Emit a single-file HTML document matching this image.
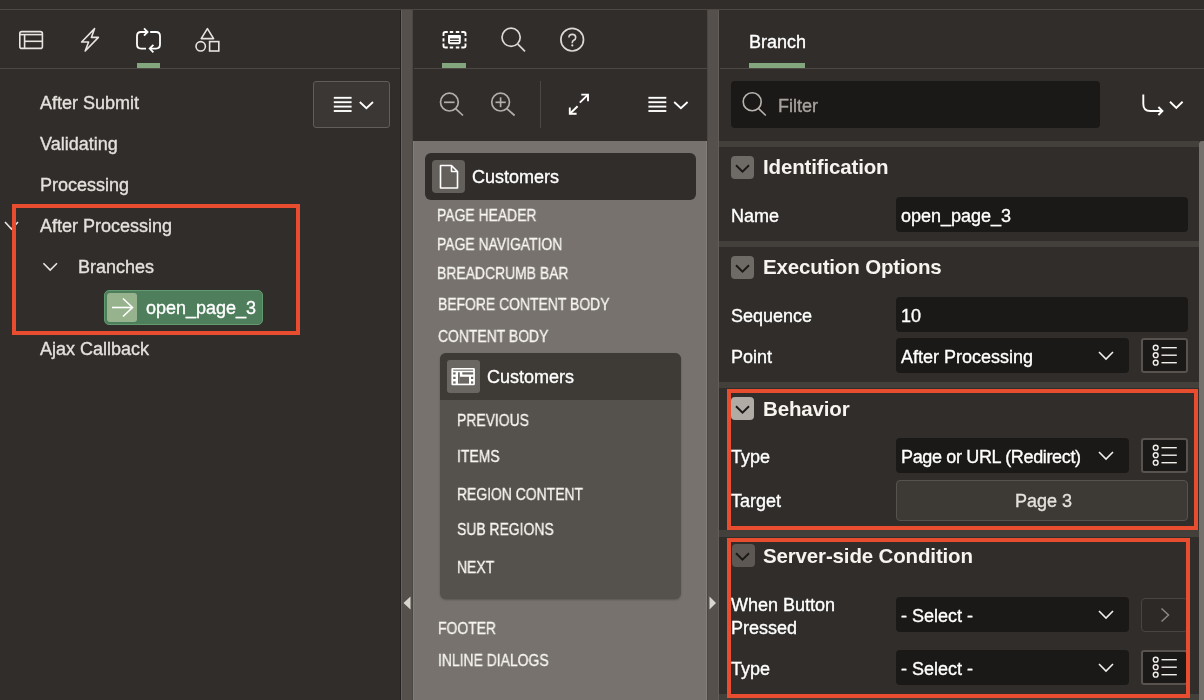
<!DOCTYPE html>
<html><head><meta charset="utf-8">
<style>
*{box-sizing:border-box;margin:0;padding:0}
html,body{width:1204px;height:700px;overflow:hidden;background:#312d2a;font-family:"Liberation Sans",sans-serif;color:#f2efeb}
.a{position:absolute}
.t{position:absolute;white-space:nowrap;line-height:1}
svg{position:absolute;overflow:visible}
.line{position:absolute;height:1px;background:#4d4844}
.spl{position:absolute;top:10px;height:690px;background:#55504b}
.green{position:absolute;height:5px;background:#84a67f}
.inp{position:absolute;background:#1b1917;border-radius:4px}
.lbtn{position:absolute;background:#1b1917;border:2px solid #58534e;border-radius:3px}
.band{position:absolute;left:719px;width:480px;background:#433f3b}
.tog{position:absolute;width:23px;height:23px;background:#6e6a65;border-radius:4px}
.lbl{will-change:transform;position:absolute;white-space:nowrap;line-height:1;font-size:18px;color:#ffffff;-webkit-text-stroke:0.35px currentColor}
.sec{will-change:transform;position:absolute;white-space:nowrap;line-height:1;font-size:20.5px;font-weight:bold;color:#f7f4f0;letter-spacing:-0.15px}
.up{will-change:transform;position:absolute;white-space:nowrap;line-height:1;font-size:16px;color:#f7f5f2;transform:scaleX(0.87);transform-origin:0 0;-webkit-text-stroke:0.3px currentColor}
.red{position:absolute;border:4px solid #e84d30}
</style></head><body>

<!-- top line -->
<div class="line" style="left:0;top:9px;width:1204px"></div>

<!-- ============ LEFT PANEL ============ -->
<div class="line" style="left:0;top:68px;width:401px"></div>
<!-- tab icons -->
<svg style="left:0;top:0" width="400" height="68">
  <g fill="none" stroke="#e8e4df" stroke-width="1.6">
    <rect x="19.8" y="31.6" width="22.6" height="16.8" rx="2"/>
    <line x1="20" y1="34.6" x2="42" y2="34.6"/>
    <line x1="24.6" y1="35" x2="24.6" y2="48"/>
    <line x1="25" y1="41.3" x2="42" y2="41.3"/>
    <path d="M94.6 28.6 L81.6 42 L88.6 42 L85.2 51 L98.4 37.4 L91.4 37.4 Z" stroke-linejoin="round"/>
  </g>
  <g fill="none" stroke="#ffffff" stroke-width="1.8">
    <path d="M147 32 H141 Q137 32 137 36 V44.6 Q137 48.6 141 48.6 H146"/>
    <path d="M144 28.3 L147.6 32 L144 35.7"/>
    <path d="M150.2 32 H156 Q160 32 160 36 V44.6 Q160 48.6 156 48.6 H150"/>
    <path d="M153.4 44.9 L149.7 48.6 L153.4 52.3"/>
  </g>
  <g fill="none" stroke="#e8e4df" stroke-width="1.6">
    <path d="M207.4 28.6 L213.6 38.6 L201.2 38.6 Z" stroke-linejoin="round"/>
    <circle cx="200.7" cy="46.3" r="4.7"/>
    <rect x="209.6" y="41.6" width="9.2" height="9.4"/>
  </g>
</svg>
<div class="green" style="left:137px;top:63px;width:23px"></div>

<!-- menu button -->
<div class="a" style="left:313px;top:81px;width:77px;height:47px;background:#3b3734;border:1.5px solid #625d58;border-radius:3px"></div>
<svg style="left:0;top:0" width="400" height="140">
  <g stroke="#ffffff" stroke-width="1.9" fill="none">
    <line x1="333.8" y1="97.8" x2="351.6" y2="97.8"/>
    <line x1="333.8" y1="102.2" x2="351.6" y2="102.2"/>
    <line x1="333.8" y1="106.6" x2="351.6" y2="106.6"/>
    <line x1="333.8" y1="111" x2="351.6" y2="111"/>
    <path d="M359.8 102 L366.4 108.2 L373 102" stroke-width="1.8"/>
  </g>
</svg>

<!-- tree -->
<div class="lbl" style="left:40px;top:94px;color:#e4e1dd">After Submit</div>
<div class="lbl" style="left:40px;top:135px;color:#e4e1dd">Validating</div>
<div class="lbl" style="left:40px;top:176px;color:#e4e1dd">Processing</div>
<div class="lbl" style="left:40px;top:217px;color:#e4e1dd">After Processing</div>
<div class="lbl" style="left:78px;top:258px;color:#e4e1dd">Branches</div>
<svg style="left:0;top:0" width="400" height="400">
  <g stroke="#e8e4df" stroke-width="1.6" fill="none">
    <path d="M5 222 L11.5 229 L18 222"/>
    <path d="M43.4 263.2 L50.2 270 L57 263.2"/>
  </g>
</svg>
<div class="a" style="left:104px;top:290px;width:159px;height:35px;background:#4e7e5c;border:1px solid #609a6e;border-radius:5px"></div>
<div class="a" style="left:107px;top:293px;width:30px;height:29px;background:#96b38e;border-radius:3px"></div>
<svg style="left:0;top:0" width="400" height="400">
  <g stroke="#ffffff" stroke-width="1.6" fill="none">
    <line x1="112" y1="307.5" x2="132.5" y2="307.5"/>
    <path d="M123 298.5 L132.5 307.5 L123 316.5"/>
  </g>
</svg>
<div class="lbl" style="left:146px;top:299px;color:#fff">open_page_3</div>
<div class="lbl" style="left:40px;top:340px;color:#e4e1dd">Ajax Callback</div>
<div class="red" style="left:12px;top:204px;width:288px;height:131px"></div>

<!-- left splitter -->
<div class="spl" style="left:400px;width:13px;border-left:1px solid #242220;border-right:1px solid #4a4641;box-shadow:inset 1px 0 #66615c"></div>
<svg style="left:0;top:0" width="420" height="700">
  <path d="M403.5 603 L410.5 596.5 L410.5 609.5 Z" fill="#d8d4cf"/>
</svg>

<!-- ============ MIDDLE PANEL ============ -->
<div class="line" style="left:414px;top:68px;width:293px"></div>
<svg style="left:0;top:0" width="720" height="140">
  <g fill="none" stroke="#ffffff" stroke-width="1.9" stroke-linecap="butt">
    <path d="M443.5 36 V33.8 Q443.5 32 445.3 32 H447.8"/>
    <path d="M461.3 32 H463.7 Q465.5 32 465.5 33.8 V36"/>
    <path d="M443.5 43.5 V45.7 Q443.5 47.5 445.3 47.5 H447.8"/>
    <path d="M461.3 47.5 H463.7 Q465.5 47.5 465.5 45.7 V43.5"/>
    <path d="M449.8 32 H453.2 M455.8 32 H459.3 M449.8 47.5 H453.2 M455.8 47.5 H459.3"/>
    <path d="M443.5 38.2 V41.4 M465.5 38.2 V41.4"/>
    <rect x="449" y="36" width="10.8" height="7.3" rx="1"/>
  </g>
  <rect x="448.2" y="35" width="12.4" height="3.4" fill="#ffffff"/>
  <line x1="450" y1="40.4" x2="459" y2="40.4" stroke="#ffffff" stroke-width="1.2"/>
  <g fill="none" stroke="#dcd8d3" stroke-width="1.7">
    <circle cx="511.1" cy="37.3" r="9.1"/>
    <line x1="517.8" y1="44.2" x2="525" y2="51.4"/>
    <circle cx="572.2" cy="39.7" r="11.3"/>
    <path d="M568.9 37.6 Q568.9 34.4 572.3 34.4 Q575.7 34.4 575.7 37.4 Q575.7 39.3 573.7 40.3 Q572.3 41 572.3 42.6 V43.2" stroke-width="1.6"/>
  </g>
  <circle cx="572.3" cy="45.4" r="1.1" fill="#dcd8d3"/>
</svg>
<div class="green" style="left:442px;top:63px;width:24px"></div>
<!-- toolbar -->
<svg style="left:0;top:0" width="720" height="140">
  <g fill="none" stroke="#b3aea9" stroke-width="1.7">
    <circle cx="449.4" cy="102.1" r="8.9"/>
    <line x1="455.6" y1="108.6" x2="463" y2="115.5"/>
    <line x1="444" y1="102.3" x2="454.6" y2="102.3"/>
    <circle cx="500.6" cy="102.1" r="8.9"/>
    <line x1="506.8" y1="108.6" x2="514.6" y2="115.5"/>
    <line x1="495.5" y1="102.3" x2="505.8" y2="102.3"/>
    <line x1="500.6" y1="97.3" x2="500.6" y2="107.2"/>
  </g>
  <line x1="540.5" y1="81" x2="540.5" y2="128" stroke="#4d4844" stroke-width="1"/>
  <g fill="none" stroke="#ffffff" stroke-width="1.9">
    <path d="M581.3 94.6 H588 V101.2"/>
    <line x1="588" y1="94.6" x2="579.8" y2="102.6"/>
    <path d="M576.6 113.8 H569.8 V107.4"/>
    <line x1="569.8" y1="113.8" x2="577.6" y2="106.2"/>
  </g>
  <g stroke="#ffffff" stroke-width="1.9" fill="none">
    <line x1="648.4" y1="97.8" x2="666.3" y2="97.8"/>
    <line x1="648.4" y1="102.2" x2="666.3" y2="102.2"/>
    <line x1="648.4" y1="106.6" x2="666.3" y2="106.6"/>
    <line x1="648.4" y1="111" x2="666.3" y2="111"/>
    <path d="M674.2 102 L680.9 108.2 L687.6 102" stroke-width="1.8"/>
  </g>
</svg>

<!-- canvas -->
<div class="a" style="left:413px;top:141px;width:294px;height:559px;background:#77726d;border-left:1px solid #827d78;border-right:1px solid #857f7b"></div>
<div class="a" style="left:425px;top:153px;width:271px;height:47px;background:#312d2a;border-radius:6px"></div>
<div class="a" style="left:432px;top:160px;width:33px;height:33px;background:#63605b;border-radius:4px"></div>
<svg style="left:0;top:0" width="720" height="700">
  <path d="M440.5 165.5 H451.5 L457.5 171.5 V188 H440.5 Z M451.5 165.5 V171.5 H457.5" fill="none" stroke="#ffffff" stroke-width="1.6" stroke-linejoin="round"/>
</svg>
<div class="lbl" style="left:472px;top:168px;color:#fff">Customers</div>

<div class="up" style="left:437px;top:208px">PAGE HEADER</div>
<div class="up" style="left:437px;top:237px">PAGE NAVIGATION</div>
<div class="up" style="left:437px;top:266px">BREADCRUMB BAR</div>
<div class="up" style="left:438px;top:297px">BEFORE CONTENT BODY</div>
<div class="up" style="left:438px;top:329px">CONTENT BODY</div>

<div class="a" style="left:440px;top:353px;width:241px;height:246px;background:#55514c;border-radius:6px;overflow:hidden;box-shadow:0 1px 2px rgba(0,0,0,.25)">
  <div class="a" style="left:0;top:0;width:241px;height:47px;background:#3e3a36"></div>
</div>
<div class="a" style="left:447px;top:360px;width:33px;height:33px;background:#6a6661;border-radius:3px"></div>
<svg style="left:0;top:0" width="720" height="700">
  <rect x="451.4" y="367.9" width="23.5" height="17.4" rx="1.2" fill="#ffffff"/>
  <g fill="#6a6661">
    <rect x="453.2" y="369.6" width="19.9" height="1.1"/>
    <rect x="453.2" y="372.3" width="2.4" height="2.2"/>
    <rect x="453.2" y="376.8" width="2.4" height="2.2"/>
    <rect x="453.2" y="381.4" width="2.4" height="2.2"/>
    <rect x="471" y="376.8" width="2.2" height="2.2"/>
    <rect x="471" y="381.4" width="2.2" height="2.2"/>
    <rect x="462.3" y="372.3" width="10.9" height="2.2"/>
    <rect x="458" y="372.3" width="1.8" height="11.3"/>
    <rect x="459.6" y="376.8" width="9.4" height="6.8"/>
  </g>
</svg>
<div class="lbl" style="left:487px;top:368px;color:#fff">Customers</div>
<div class="up" style="left:457px;top:413px">PREVIOUS</div>
<div class="up" style="left:457px;top:449px">ITEMS</div>
<div class="up" style="left:457px;top:487px">REGION CONTENT</div>
<div class="up" style="left:457px;top:522px">SUB REGIONS</div>
<div class="up" style="left:457px;top:560px">NEXT</div>
<div class="up" style="left:438px;top:621px">FOOTER</div>
<div class="up" style="left:438px;top:653px">INLINE DIALOGS</div>

<!-- right splitter -->
<div class="spl" style="left:707px;width:12px;border-left:1px solid #4a4641;border-right:1px solid #625d59"></div>
<svg style="left:0;top:0" width="720" height="700">
  <path d="M716 603 L709.5 596.5 L709.5 609.5 Z" fill="#d8d4cf"/>
</svg>

<!-- ============ RIGHT PANEL ============ -->
<div class="line" style="left:720px;top:68px;width:484px"></div>
<div class="lbl" style="left:749px;top:33px;color:#fff">Branch</div>
<div class="green" style="left:749px;top:63px;width:56px"></div>

<div class="inp" style="left:731px;top:81px;width:369px;height:47px"></div>
<svg style="left:0;top:0" width="1204" height="140">
  <g fill="none" stroke="#b8b3ae" stroke-width="1.6">
    <circle cx="752.2" cy="101.8" r="9"/>
    <line x1="758.4" y1="108.4" x2="765.8" y2="115.5"/>
  </g>
  <g fill="none" stroke="#ffffff" stroke-width="1.9">
    <path d="M1143.3 94.5 V104 Q1143.3 111 1150.3 111 H1162.3"/>
    <path d="M1158.4 107 L1162.4 111 L1158.4 115"/>
    <path d="M1170 101.8 L1176.3 108 L1182.6 101.8"/>
  </g>
</svg>
<div class="lbl" style="left:778px;top:97px;color:#a8a39e">Filter</div>

<!-- bands -->
<div class="band" style="top:141px;height:6px"></div>
<div class="band" style="top:241px;height:6px"></div>
<div class="band" style="top:382px;height:6px"></div>
<div class="band" style="top:530px;height:7px"></div>
<div class="band" style="top:694px;height:6px"></div>

<!-- scrollbar -->
<div class="a" style="left:1199px;top:141px;width:5px;height:559px;background:#75706b;border-radius:3px 0 0 0"></div>

<!-- Identification -->
<div class="tog" style="left:731px;top:156px"></div>
<div class="sec" style="left:763px;top:157px">Identification</div>
<div class="lbl" style="left:731px;top:207px">Name</div>
<div class="inp" style="left:896px;top:197px;width:292px;height:35px"></div>
<div class="lbl" style="left:901px;top:207px;color:#fff">open_page_3</div>

<!-- Execution options -->
<div class="tog" style="left:731px;top:256px"></div>
<div class="sec" style="left:763px;top:257px">Execution Options</div>
<div class="lbl" style="left:731px;top:307px">Sequence</div>
<div class="inp" style="left:896px;top:297px;width:292px;height:35px"></div>
<div class="lbl" style="left:901px;top:307px;color:#fff">10</div>
<div class="lbl" style="left:731px;top:348px">Point</div>
<div class="inp" style="left:896px;top:338px;width:233px;height:35px"></div>
<div class="lbl" style="left:901px;top:348px;color:#fff">After Processing</div>
<div class="lbtn" style="left:1141px;top:338px;width:47px;height:35px"></div>

<!-- Behavior -->
<div class="tog" style="left:731px;top:397px;background:#b0aba5"></div>
<div class="sec" style="left:763px;top:399px">Behavior</div>
<div class="lbl" style="left:731px;top:448px">Type</div>
<div class="inp" style="left:896px;top:438px;width:233px;height:35px"></div>
<div class="lbl" style="left:901px;top:448px;color:#fff;letter-spacing:-0.35px">Page or URL (Redirect)</div>
<div class="lbtn" style="left:1141px;top:438px;width:47px;height:35px"></div>
<div class="lbl" style="left:731px;top:492px">Target</div>
<div class="a" style="left:896px;top:480px;width:292px;height:41px;background:#3d3935;border:1px solid #57524d;border-radius:4px"></div>
<div class="lbl" style="left:1015px;top:492px;color:#e4e1dd">Page 3</div>
<div class="red" style="left:727px;top:389px;width:471px;height:141px"></div>

<!-- Server-side -->
<div class="tog" style="left:732px;top:544px;background:#5d5853"></div>
<div class="sec" style="left:763px;top:546px">Server-side Condition</div>
<div class="lbl" style="left:731px;top:596px">When Button</div>
<div class="lbl" style="left:731px;top:619px">Pressed</div>
<div class="inp" style="left:896px;top:597px;width:233px;height:35px"></div>
<div class="lbl" style="left:901px;top:607px;color:#fff">- Select -</div>
<div class="a" style="left:1141px;top:598px;width:47px;height:34px;background:#2c2926;border:1px solid #4a4541;border-radius:4px"></div>
<div class="lbl" style="left:731px;top:660px">Type</div>
<div class="inp" style="left:896px;top:650px;width:233px;height:35px"></div>
<div class="lbl" style="left:901px;top:660px;color:#fff">- Select -</div>
<div class="lbtn" style="left:1141px;top:650px;width:47px;height:35px"></div>
<div class="red" style="left:727px;top:538px;width:463px;height:160px"></div>

<!-- chevrons / list icons in right panel -->
<svg style="left:0;top:0" width="1204" height="700">
  <g fill="none" stroke="#f2efeb" stroke-width="1.6">
  </g>
  <g fill="none" stroke="#1a1816" stroke-width="1.9">
    <path d="M736 165.3 L742.5 171.6 L749 165.3"/>
    <path d="M736 265.3 L742.5 271.6 L749 265.3"/>
    <path d="M736 406.3 L742.5 412.6 L749 406.3"/>
    <path d="M736 553.3 L742.5 559.6 L749 553.3"/>
  </g>
  <g fill="none" stroke="#f2efeb" stroke-width="1.6">
    <path d="M1099 352 L1106 359 L1113 352"/>
    <path d="M1099 452 L1106 459 L1113 452"/>
    <path d="M1099 611 L1106 618 L1113 611"/>
    <path d="M1099 664 L1106 671 L1113 664"/>
  </g>
  <g fill="none" stroke="#8c8782" stroke-width="1.5">
    <path d="M1161.5 608.5 L1168.5 615 L1161.5 621.5"/>
  </g>
  <g id="li" fill="none" stroke="#f2efeb" stroke-width="1.4">
    <circle cx="1155.7" cy="347.7" r="2.4"/>
    <circle cx="1155.7" cy="355.2" r="2.4"/>
    <circle cx="1155.7" cy="362.7" r="2.4"/>
    <line x1="1161.5" y1="347.7" x2="1176.8" y2="347.7"/>
    <line x1="1161.5" y1="355.2" x2="1176.8" y2="355.2"/>
    <line x1="1161.5" y1="362.7" x2="1176.8" y2="362.7"/>
  </g>
  <use href="#li" y="100"/>
  <use href="#li" y="312"/>
</svg>

</body></html>
